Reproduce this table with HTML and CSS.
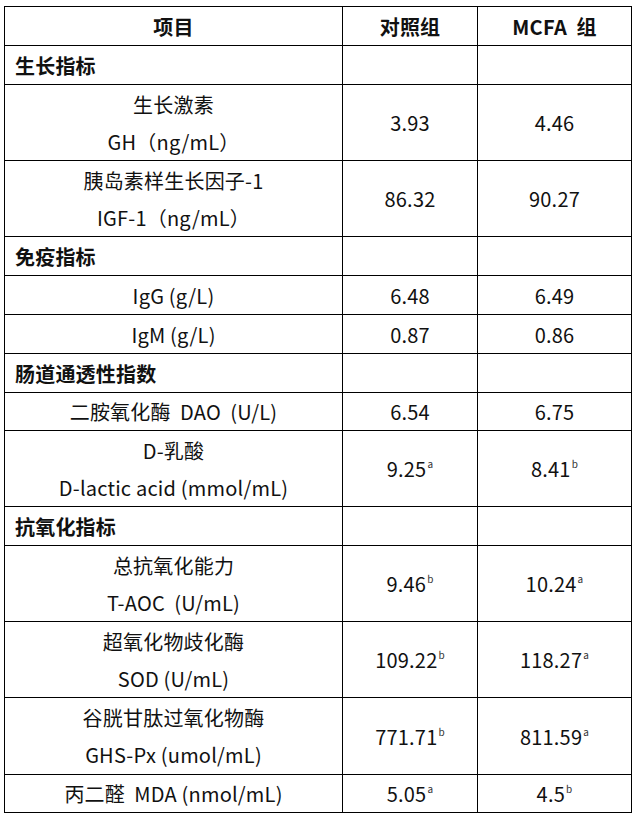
FILE: index.html
```html
<!DOCTYPE html>
<html lang="zh">
<head>
<meta charset="utf-8">
<link rel="stylesheet" href="styles.css">
</head>
<body>
<div class="data">
  <div class="row h39 head"><div class="cell">项目</div><div class="cell">对照组</div><div class="cell">MCFA&nbsp; 组</div></div>
  <div class="row h39 sec"><div class="cell">生长指标</div><div class="cell"></div><div class="cell"></div></div>
  <div class="row h76"><div class="cell">生长激素<br>GH（ng/mL）</div><div class="cell">3.93</div><div class="cell">4.46</div></div>
  <div class="row h76"><div class="cell">胰岛素样生长因子-1<br>IGF-1（ng/mL）</div><div class="cell">86.32</div><div class="cell">90.27</div></div>
  <div class="row h39 sec"><div class="cell">免疫指标</div><div class="cell"></div><div class="cell"></div></div>
  <div class="row h39"><div class="cell">IgG (g/L)</div><div class="cell">6.48</div><div class="cell">6.49</div></div>
  <div class="row h39"><div class="cell">IgM (g/L)</div><div class="cell">0.87</div><div class="cell">0.86</div></div>
  <div class="row h39 sec"><div class="cell">肠道通透性指数</div><div class="cell"></div><div class="cell"></div></div>
  <div class="row h38"><div class="cell">二胺氧化酶&nbsp; DAO &nbsp;(U/L)</div><div class="cell">6.54</div><div class="cell">6.75</div></div>
  <div class="row h76"><div class="cell">D-乳酸<br>D-lactic acid (mmol/mL)</div><div class="cell"><span>9.25<sup>a</sup></span></div><div class="cell"><span>8.41<sup>b</sup></span></div></div>
  <div class="row h39 sec"><div class="cell">抗氧化指标</div><div class="cell"></div><div class="cell"></div></div>
  <div class="row h76"><div class="cell">总抗氧化能力<br>T-AOC&nbsp; (U/mL)</div><div class="cell"><span>9.46<sup>b</sup></span></div><div class="cell"><span>10.24<sup>a</sup></span></div></div>
  <div class="row h76"><div class="cell">超氧化物歧化酶<br>SOD (U/mL)</div><div class="cell"><span>109.22<sup>b</sup></span></div><div class="cell"><span>118.27<sup>a</sup></span></div></div>
  <div class="row h77"><div class="cell">谷胱甘肽过氧化物酶<br>GHS-Px (umol/mL)</div><div class="cell"><span>771.71<sup>b</sup></span></div><div class="cell"><span>811.59<sup>a</sup></span></div></div>
  <div class="row h38"><div class="cell">丙二醛&nbsp; MDA (nmol/mL)</div><div class="cell"><span>5.05<sup>a</sup></span></div><div class="cell"><span>4.5<sup>b</sup></span></div></div>
</div>
</body>
</html>
```
FILE: styles.css
```css
html, body {
  background: #ffffff;
}
body {
  margin: 6px 0 0 4px;
  font-family: "Noto Sans CJK SC", "Noto Sans", sans-serif;
  color: #111111;
  font-size: 20px;
}
.data {
  display: flex;
  flex-direction: column;
  width: 628px;
  border-top: 1px solid #000;
  border-left: 1px solid #000;
  box-sizing: border-box;
}
.row {
  display: grid;
  grid-template-columns: 338px 135px 154px;
}
.h38 { height: 38px; }
.h39 { height: 39px; }
.h76 { height: 76px; }
.h77 { height: 77px; }
.cell {
  box-sizing: border-box;
  border-right: 1px solid #000;
  border-bottom: 1px solid #000;
  display: flex;
  align-items: center;
  justify-content: center;
  text-align: center;
  line-height: 37px;
  letter-spacing: 0.2px;
}
.head .cell { font-weight: bold; }
.sec .cell { font-weight: bold; }
.sec .cell:first-child { justify-content: flex-start; padding-left: 10px; }
sup {
  font-size: 10px;
  line-height: 0;
  vertical-align: 9px;
  margin-left: 1px;
  color: #333;
}
```
